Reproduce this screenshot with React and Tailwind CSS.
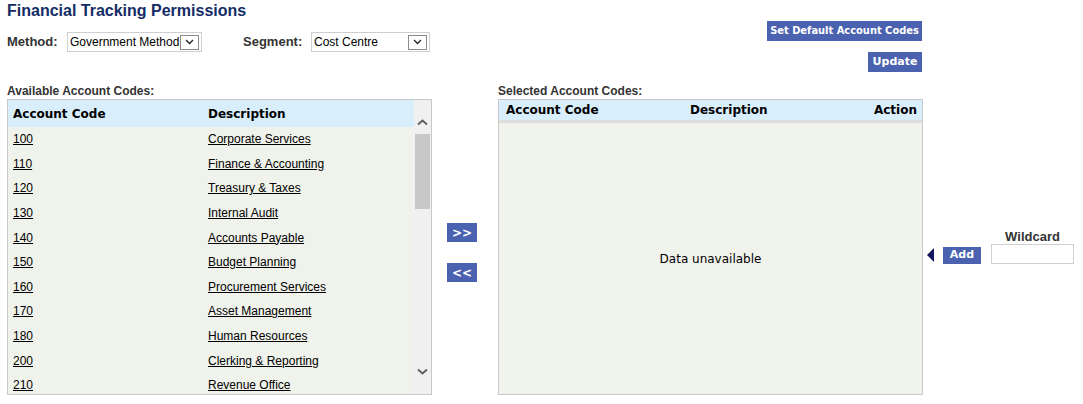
const rows = [
  ['100', 'Corporate Services'],
  ['110', 'Finance & Accounting'],
  ['120', 'Treasury & Taxes'],
  ['130', 'Internal Audit'],
  ['140', 'Accounts Payable'],
  ['150', 'Budget Planning'],
  ['160', 'Procurement Services'],
  ['170', 'Asset Management'],
  ['180', 'Human Resources'],
  ['200', 'Clerking & Reporting'],
  ['210', 'Revenue Office'],
]

const arial = "font-['Liberation_Sans',Arial,sans-serif]"
const verdana = "font-['DejaVu_Sans',Verdana,sans-serif]"
const condensed = "font-['DejaVu_Sans_Condensed','DejaVu_Sans',Verdana,sans-serif]"

function Chevron({ down, className }) {
  return (
    <svg width="11" height="7" viewBox="0 0 11 7" className={className}>
      <path
        d={down ? 'M1 1.5 L5.5 5.5 L10 1.5' : 'M1 5.5 L5.5 1.5 L10 5.5'}
        fill="none"
        stroke="#606060"
        strokeWidth="2"
      />
    </svg>
  )
}

function Select({ value, width }) {
  return (
    <div
      className={`flex h-5 items-center justify-between border border-[#cfcfcf] bg-white pl-[2px] pr-[2px] text-[12px] font-normal text-black ${arial}`}
      style={{ width }}
    >
      <span className="whitespace-nowrap leading-none">{value}</span>
      <span className="flex h-[15px] w-[19px] shrink-0 items-center justify-center border border-[#8a8a8a] bg-white">
        <svg width="9" height="6" viewBox="0 0 9 6">
          <path d="M1 1 L4.5 4.5 L8 1" fill="none" stroke="#222" strokeWidth="1.3" />
        </svg>
      </span>
    </div>
  )
}

function BlueButton({ children, className = '' }) {
  return (
    <div
      className={`flex h-5 items-center justify-center whitespace-nowrap bg-[#4a62b0] font-bold text-white ${className}`}
    >
      {children}
    </div>
  )
}

export default function App() {
  return (
    <div className="h-[404px] w-[1083px] bg-white pl-[7px] text-[#333]">
      {/* top area */}
      <div className="flex w-[915px] justify-between">
        <div>
          <div className={`mt-[1px] h-5 text-[16px] font-bold leading-5 text-[#142c66] ${arial}`}>
            Financial Tracking Permissions
          </div>
          <div className={`mt-[11px] flex items-center text-[13px] font-bold ${arial}`}>
            <span className="w-[60px]">Method:</span>
            <Select value="Government Method" width="135px" />
            <span className="ml-[41px] w-[68px]">Segment:</span>
            <Select value="Cost Centre" width="119px" />
          </div>
        </div>
        <div className="flex flex-col items-end gap-[11px] pt-[21px]">
          <BlueButton className={`w-[155px] text-[11px] ${condensed}`}>Set Default Account Codes</BlueButton>
          <BlueButton className={`w-[54px] text-[11px] ${verdana}`}>Update</BlueButton>
        </div>
      </div>

      {/* lists */}
      <div className="mt-[12px] flex items-start">
        <div className="w-[425px]">
          <div className={`h-[15px] text-[12px] font-bold leading-[15px] ${arial}`}>Available Account Codes:</div>
          <div className="flex h-[296px] border border-[#c8c8c8] bg-[#f0f2ec]">
            <div className="flex-1 overflow-hidden">
              <div className={`flex h-[27px] items-center bg-[#d8eefb] text-[12px] font-bold text-black ${verdana}`}>
                <span className="w-[200px] pl-[5px]">Account Code</span>
                <span>Description</span>
              </div>
              {rows.map(([code, desc]) => (
                <div key={code} className={`flex h-[24.6px] items-center text-[12px] text-black ${arial}`}>
                  <span className="w-[200px] pl-[5px] underline">{code}</span>
                  <span className="underline">{desc}</span>
                </div>
              ))}
            </div>
            <div className="flex w-[17px] flex-col items-center bg-[#f0f0f0]">
              <Chevron className="mt-[19px]" />
              <div className="mt-[8px] h-[75px] w-[15px] bg-[#c8c8c8]" />
              <div className="flex-1" />
              <Chevron down className="mb-[19px]" />
            </div>
          </div>
        </div>

        <div className="ml-[15px] mt-[139px] flex flex-col gap-[21px]">
          <BlueButton className={`h-[19px] w-[30px] text-[12px] ${verdana}`}>&gt;&gt;</BlueButton>
          <BlueButton className={`h-[19px] w-[30px] text-[12px] ${verdana}`}>&lt;&lt;</BlueButton>
        </div>

        <div className="ml-[21px] w-[425px]">
          <div className={`h-[15px] text-[12px] font-bold leading-[15px] ${arial}`}>Selected Account Codes:</div>
          <div className="flex h-[296px] flex-col border border-[#c8c8c8] bg-[#f0f2ec]">
            <div className={`flex h-[23px] items-center border-b-[3px] border-[#dcdcdc] bg-[#d8eefb] pr-[5px] text-[12px] font-bold text-black ${verdana}`}>
              <span className="w-[191px] pl-[7px]">Account Code</span>
              <span>Description</span>
              <span className="ml-auto">Action</span>
            </div>
            <div className={`flex flex-1 items-center justify-center text-[12px] text-black ${verdana}`}>
              Data unavailable
            </div>
          </div>
        </div>

        <div className="ml-[4px] mt-[146px] flex items-end">
          <svg width="7" height="14" viewBox="0 0 7 14" className="mb-[2px]">
            <path d="M7 0 L0 7 L7 14 Z" fill="#14145a" />
          </svg>
          <BlueButton className={`ml-[9px] h-[17px] w-[38px] text-[11px] ${verdana}`}>Add</BlueButton>
          <div className="ml-[10px] flex flex-col items-center">
            <div className={`mb-[1px] text-[13px] font-bold leading-none text-[#333] ${arial}`}>Wildcard</div>
            <div className="h-5 w-[83px] border border-[#d0d0d0] bg-white" />
          </div>
        </div>
      </div>
    </div>
  )
}
